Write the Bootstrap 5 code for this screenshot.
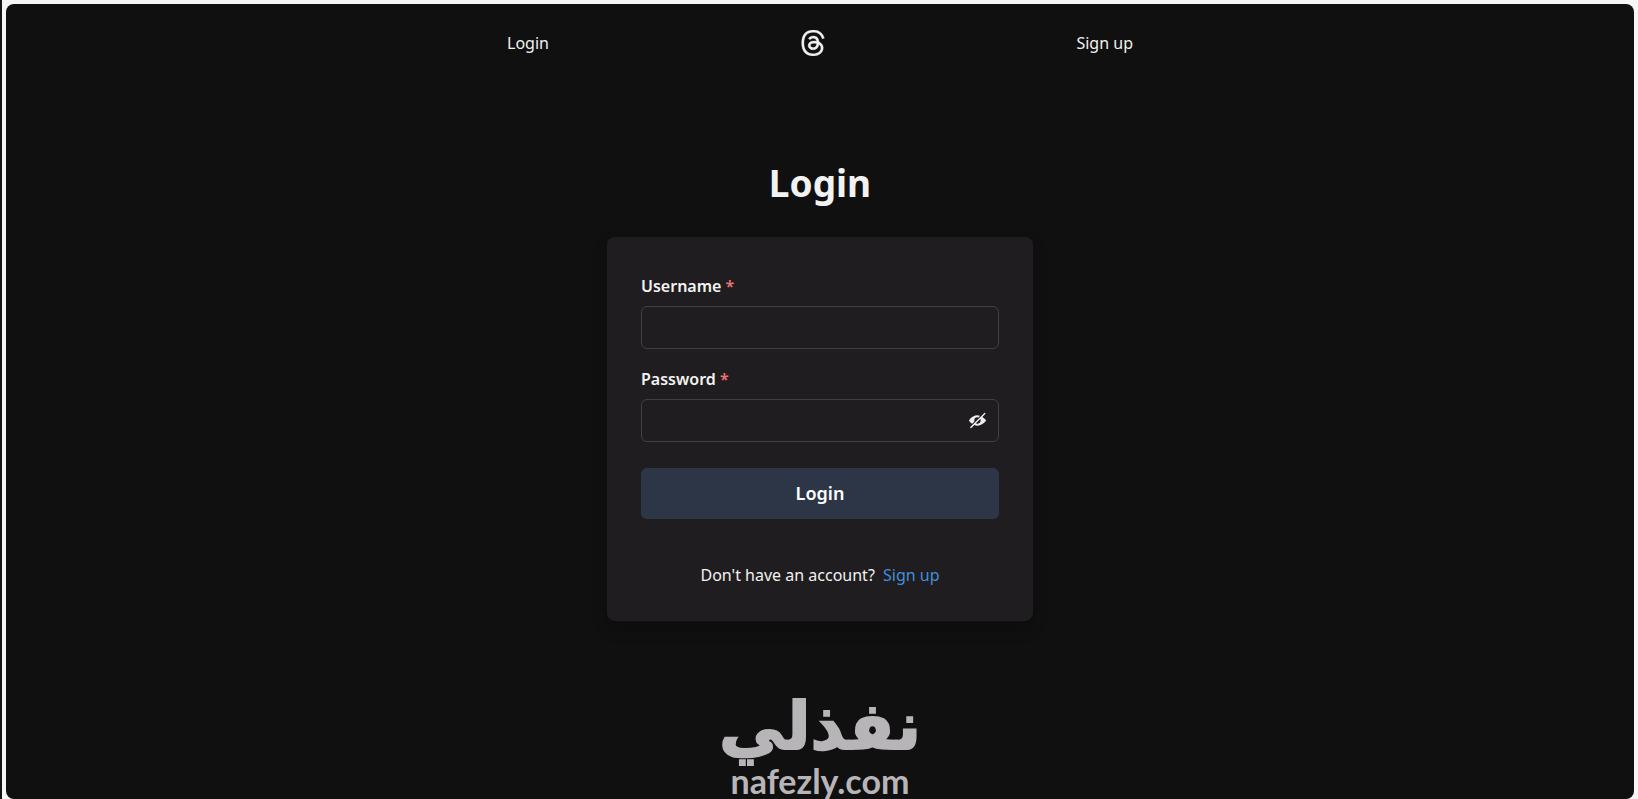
<!DOCTYPE html>
<html lang="en">
<head>
<meta charset="utf-8">
<meta name="viewport" content="width=device-width, initial-scale=1">
<title>Login</title>
<link href="https://cdn.jsdelivr.net/npm/bootstrap@5.3.0/dist/css/bootstrap.min.css" rel="stylesheet">
<style>
  body { background: #f6f6f6; color: #f2f2f2; font-family: "Noto Sans", sans-serif; font-size: 16px; line-height: 24px; border-left: 2px solid #151515; }
  .shell { background: #101010; border-radius: 8px; }
  .topbar { width: 100%; max-width: 626px; padding-top: 26px; }
  .topbar a { color: #f2f2f2; }
  .login-area { padding-top: 103px; }
  .page-title { font-size: 37px; line-height: 48px; font-weight: 700; margin-bottom: 30px; }
  .login-box { width: 100%; max-width: 426px; padding: 37px 34px 34px; background: #1f1d1f; border-radius: 8px; box-shadow: 0 8px 16px rgba(0,0,0,.2); }
  .form-label { font-weight: 600; margin-bottom: 8px; }
  .field-row { margin-bottom: 18px; }
  .field-row.last-row { margin-bottom: 26px; }
  .star { color: #ee7474; }
  .field { height: 43px; background: transparent; border: 1px solid #403f41; border-radius: 6px; color: #f2f2f2; }
  .field:focus { background: transparent; color: #fff; border-color: #63b3ed; box-shadow: none; }
  .eye-btn { color: #eee; width: 43px; border: 0; }
  .submit-btn { height: 51px; background: #2d3646; color: #fff; font-size: 18px; font-weight: 600; border: 0; border-radius: 6px; }
  .submit-btn:hover { background: #3a465a; color: #fff; }
  .signup-line { margin: 44px 0 0; }
  .signup { color: #4290dc; }
  .brand-mark { color: #b7b5b8; font-weight: 700; }
  .brand-ar { font-family: "DejaVu Sans", sans-serif; font-size: 66px; line-height: 72px; -webkit-text-stroke: 2px #b7b5b8; }
  .brand-en { font-family: Lato, sans-serif; font-size: 34px; line-height: 36px; }
</style>
</head>
<body class="vh-100 overflow-hidden">
<div class="h-100 pt-1 ps-1 pe-1">
  <div class="shell h-100 d-flex flex-column align-items-center">
    <nav class="topbar d-flex justify-content-between align-items-center">
      <a href="#login" class="text-decoration-none">Login</a>
      <a href="#home" aria-label="Home" class="d-flex"><svg width="26" height="26" viewBox="0 0 16 16" fill="currentColor" stroke="currentColor" stroke-width=".2"><path d="M6.321 6.016c-.27-.18-1.166-.802-1.166-.802.756-1.081 1.753-1.502 3.132-1.502.975 0 1.803.327 2.394.948s.928 1.509 1.005 2.644q.492.207.905.484c1.109.745 1.719 1.86 1.719 3.137 0 2.716-2.226 5.075-6.256 5.075C4.594 16 1 13.987 1 7.994 1 2.034 4.482 0 8.044 0 9.69 0 13.55.243 15 5.036l-1.36.353C12.516 1.974 10.163 1.43 8.006 1.43c-3.565 0-5.582 2.171-5.582 6.79 0 4.143 2.254 6.343 5.63 6.343 2.777 0 4.847-1.443 4.847-3.556 0-1.438-1.208-2.127-1.27-2.127-.236 1.234-.868 3.31-3.644 3.31-1.618 0-3.013-1.118-3.013-2.582 0-2.09 1.984-2.847 3.55-2.847.586 0 1.294.04 1.663.114 0-.637-.54-1.728-1.9-1.728-1.25 0-1.566.405-1.967.868ZM8.716 8.19c-2.04 0-2.304.87-2.304 1.416 0 .878 1.043 1.168 1.6 1.168 1.02 0 2.067-.282 2.232-2.423a6.2 6.2 0 0 0-1.528-.161"/></svg></a>
      <a href="#signup" class="text-decoration-none">Sign up</a>
    </nav>
    <main class="login-area w-100 d-flex flex-column align-items-center">
      <h1 class="page-title">Login</h1>
      <form class="login-box" id="login">
        <div class="field-row">
          <label class="form-label d-block" for="username">Username <span class="star">*</span></label>
          <input class="form-control field" type="text" id="username" required>
        </div>
        <div class="field-row last-row">
          <label class="form-label d-block" for="password">Password <span class="star">*</span></label>
          <div class="position-relative">
            <input class="form-control field" type="password" id="password" required>
            <button type="button" class="btn eye-btn p-0 position-absolute top-0 end-0 h-100 d-flex align-items-center justify-content-center" aria-label="Show password"><svg width="17" height="17" viewBox="0 0 24 24" fill="currentColor"><path d="M23.2,10.549a20.954,20.954,0,0,0-4.3-3.6l4-3.995a1,1,0,1,0-1.414-1.414l-.018.018a.737.737,0,0,1-.173.291l-19.5,19.5c-.008.007-.018.009-.026.017a1,1,0,0,0,1.631,1.088l4.146-4.146a11.26,11.26,0,0,0,4.31.939h.3c4.256,0,8.489-2.984,11.051-5.8A2.171,2.171,0,0,0,23.2,10.549ZM16.313,13.27a4.581,4.581,0,0,1-3,3.028,4.3,4.3,0,0,1-3.1-.19.253.253,0,0,1-.068-.407l5.56-5.559a.252.252,0,0,1,.407.067A4.3,4.3,0,0,1,16.313,13.27Z"/><path d="M7.615,13.4a.244.244,0,0,0,.061-.24A4.315,4.315,0,0,1,7.5,12,4.5,4.5,0,0,1,12,7.5a4.276,4.276,0,0,1,1.16.173.244.244,0,0,0,.24-.062l1.941-1.942a.254.254,0,0,0-.1-.421A10.413,10.413,0,0,0,12,4.75C7.7,4.692,3.4,7.7.813,10.549a2.15,2.15,0,0,0-.007,2.9,21.209,21.209,0,0,0,3.438,3.03.256.256,0,0,0,.326-.029Z"/></svg></button>
          </div>
        </div>
        <button type="submit" class="btn submit-btn w-100 p-0">Login</button>
        <p class="signup-line text-center">Don't have an account? <a href="#signup" class="signup text-decoration-none ms-1">Sign up</a></p>
      </form>
    </main>
    <footer class="brand-mark text-center mt-auto">
      <div class="brand-ar" lang="ar" dir="rtl">نفذلي</div>
      <div class="brand-en">nafezly.com</div>
    </footer>
  </div>
</div>
<script src="https://cdn.jsdelivr.net/npm/bootstrap@5.3.0/dist/js/bootstrap.bundle.min.js"></script>
</body>
</html>
